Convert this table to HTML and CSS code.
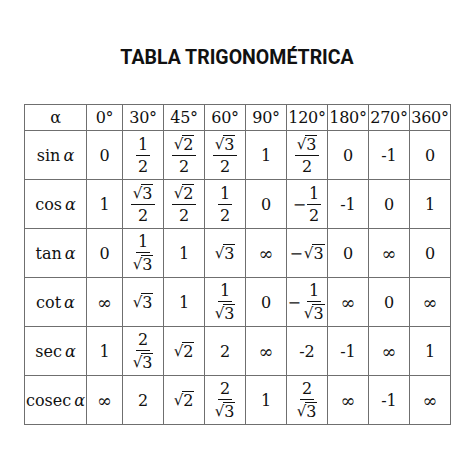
FILE: index.html
```html
<!DOCTYPE html>
<html lang="es">
<head>
<meta charset="utf-8">
<link rel="stylesheet" href="styles.css">
</head>
<body>
<h1 class="title">TABLA TRIGONOMÉTRICA</h1>
<table class="trig">
  <colgroup>
    <col class="c0"><col class="c1"><col class="c2"><col class="c2"><col class="c2"><col class="c2"><col class="c2"><col class="c2"><col class="c2"><col class="c2">
  </colgroup>
  <tr class="head">
    <td>α</td><td>0°</td><td>30°</td><td>45°</td><td>60°</td><td>90°</td><td>120°</td><td>180°</td><td>270°</td><td>360°</td>
  </tr>
  <tr>
    <td>sin<span class="a">α</span></td>
    <td>0</td>
    <td><span class="frac"><span class="num">1</span><span class="den">2</span></span></td>
    <td><span class="frac"><span class="num"><span class="sq"><span class="rs">√</span><span class="rv">2</span></span></span><span class="den">2</span></span></td>
    <td><span class="frac"><span class="num"><span class="sq"><span class="rs">√</span><span class="rv">3</span></span></span><span class="den">2</span></span></td>
    <td>1</td>
    <td><span class="frac"><span class="num"><span class="sq"><span class="rs">√</span><span class="rv">3</span></span></span><span class="den">2</span></span></td>
    <td>0</td><td>-1</td><td>0</td>
  </tr>
  <tr>
    <td>cos<span class="a">α</span></td>
    <td>1</td>
    <td><span class="frac"><span class="num"><span class="sq"><span class="rs">√</span><span class="rv">3</span></span></span><span class="den">2</span></span></td>
    <td><span class="frac"><span class="num"><span class="sq"><span class="rs">√</span><span class="rv">2</span></span></span><span class="den">2</span></span></td>
    <td><span class="frac"><span class="num">1</span><span class="den">2</span></span></td>
    <td>0</td>
    <td><span class="minus">−</span><span class="frac"><span class="num">1</span><span class="den">2</span></span></td>
    <td>-1</td><td>0</td><td>1</td>
  </tr>
  <tr>
    <td>tan<span class="a">α</span></td>
    <td>0</td>
    <td><span class="frac"><span class="num">1</span><span class="den"><span class="sq"><span class="rs">√</span><span class="rv">3</span></span></span></span></td>
    <td>1</td>
    <td><span class="sq"><span class="rs">√</span><span class="rv">3</span></span></td>
    <td><span class="inf">∞</span></td>
    <td><span class="minus">−</span><span class="sq"><span class="rs">√</span><span class="rv">3</span></span></td>
    <td>0</td><td><span class="inf">∞</span></td><td>0</td>
  </tr>
  <tr>
    <td>cot<span class="a">α</span></td>
    <td><span class="inf">∞</span></td>
    <td><span class="sq"><span class="rs">√</span><span class="rv">3</span></span></td>
    <td>1</td>
    <td><span class="frac"><span class="num">1</span><span class="den"><span class="sq"><span class="rs">√</span><span class="rv">3</span></span></span></span></td>
    <td>0</td>
    <td><span class="minus">−</span><span class="frac"><span class="num">1</span><span class="den"><span class="sq"><span class="rs">√</span><span class="rv">3</span></span></span></span></td>
    <td><span class="inf">∞</span></td><td>0</td><td><span class="inf">∞</span></td>
  </tr>
  <tr>
    <td>sec<span class="a">α</span></td>
    <td>1</td>
    <td><span class="frac"><span class="num">2</span><span class="den"><span class="sq"><span class="rs">√</span><span class="rv">3</span></span></span></span></td>
    <td><span class="sq"><span class="rs">√</span><span class="rv">2</span></span></td>
    <td>2</td>
    <td><span class="inf">∞</span></td>
    <td>-2</td><td>-1</td><td><span class="inf">∞</span></td><td>1</td>
  </tr>
  <tr>
    <td>cosec<span class="a">α</span></td>
    <td><span class="inf">∞</span></td>
    <td>2</td>
    <td><span class="sq"><span class="rs">√</span><span class="rv">2</span></span></td>
    <td><span class="frac"><span class="num">2</span><span class="den"><span class="sq"><span class="rs">√</span><span class="rv">3</span></span></span></span></td>
    <td>1</td>
    <td><span class="frac"><span class="num">2</span><span class="den"><span class="sq"><span class="rs">√</span><span class="rv">3</span></span></span></span></td>
    <td><span class="inf">∞</span></td><td>-1</td><td><span class="inf">∞</span></td>
  </tr>
</table>
</body>
</html>
```
FILE: styles.css
```css
html, body {
  margin: 0;
  padding: 0;
  background: #fff;
}
body {
  width: 474px;
  height: 474px;
  overflow: hidden;
}
.title {
  margin: 0;
  padding-top: 46px;
  height: 59px;
  box-sizing: border-box;
  text-align: center;
  font-family: Roboto, "Liberation Sans", sans-serif;
  font-weight: 700;
  font-size: 19.5px;
  line-height: 24px;
  color: #111;
}
.trig {
  margin: 45px 0 0 24px;
  border-collapse: collapse;
  table-layout: fixed;
  width: 427px;
  font-family: "DejaVu Serif", "Liberation Serif", serif;
  font-size: 16px;
  color: #111;
}
.c0 { width: 62px; }
.c1 { width: 36px; }
.c2 { width: 41px; }
.trig td {
  border: 1.5px solid #6f6f6f;
  text-align: center;
  vertical-align: middle;
  height: 48px;
  padding: 0;
  white-space: nowrap;
}
.trig .head td {
  height: 25px;
  line-height: 20px;
  letter-spacing: -0.3px;
}
.a {
  font-style: italic;
  margin-left: 3px;
}
.inf {
  font-size: 18px;
}
.frac {
  display: inline-flex;
  flex-direction: column;
  align-items: center;
  vertical-align: middle;
  line-height: 19px;
}
.num {
  display: block;
  border-bottom: 1px solid #111;
  padding: 0 2px 1px;
}
.den {
  display: block;
  padding: 1px 2px 0;
}
.sq {
  display: inline-flex;
  align-items: stretch;
  line-height: 19px;
}
.rs {
  display: inline-block;
  font-family: "DejaVu Serif", serif;
  font-size: 15px;
  line-height: 19px;
  margin-right: -1px;
}
.rv {
  display: inline-block;
  border-top: 1px solid #111;
  padding: 0 1px;
  line-height: 18px;
}
.minus {
  margin-right: 1px;
  vertical-align: middle;
}
```
